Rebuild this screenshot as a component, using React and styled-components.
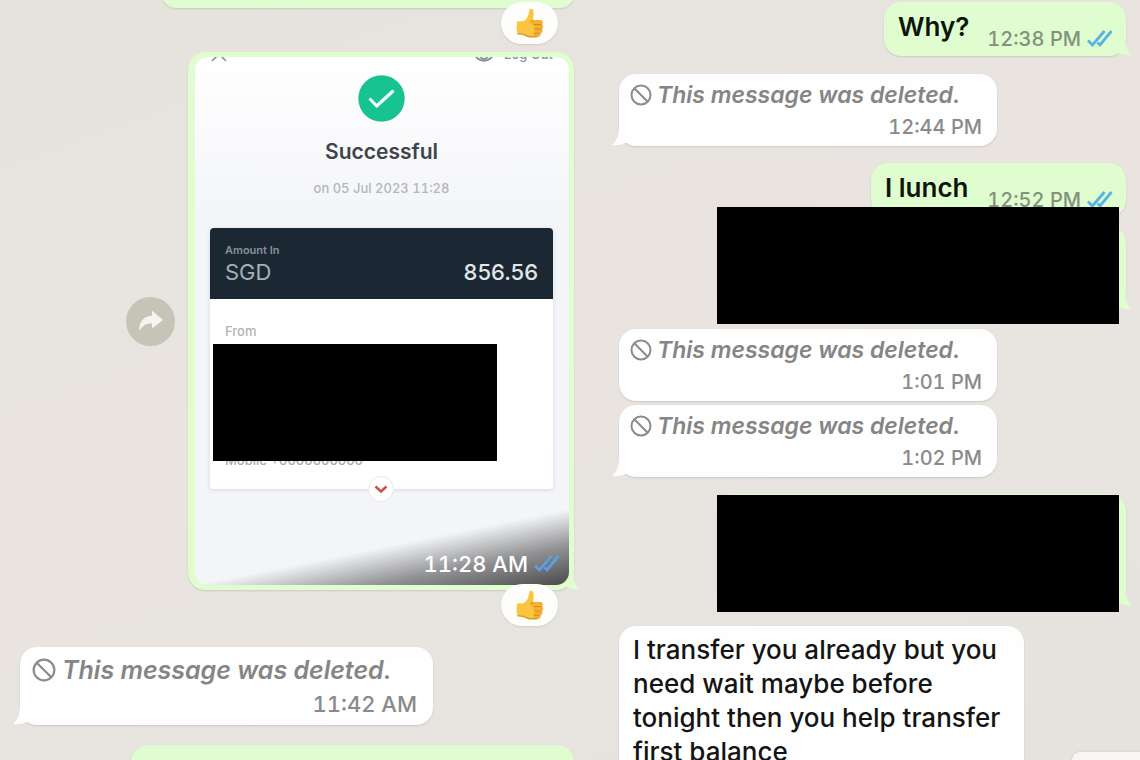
import React from "react";
import styled, { createGlobalStyle } from "styled-components";

const GlobalStyle = createGlobalStyle`
  * {
    box-sizing: border-box;
  }

  body {
    margin: 0;
    background-color: #e8e4df;
    font-family: Inter, "Liberation Sans", sans-serif;
  }

  p {
    margin: 0;
  }
`;

const Page = styled.main`
  position: relative;
  display: grid;
  grid-template-columns: 554fr 507fr;
  column-gap: 45px;
  height: 100vh;
  padding: 0 14px 0 20px;
  overflow: hidden;
  background: linear-gradient(160deg, #e6e3dd, #e9e4e0 45%, #e6e3de);
`;

const Chat = styled.section`
  display: flex;
  flex-direction: column;
  min-width: 0;
`;

const Bubble = styled.div`
  position: relative;
  flex-shrink: 0;
  align-self: ${(props) => (props.$mine ? "flex-end" : "flex-start")};
  width: ${(props) => props.$width || "auto"};
  height: ${(props) => props.$height || "auto"};
  margin-top: ${(props) => props.$space || 0}px;
  border-radius: 17px;
  background-color: ${(props) => (props.$mine ? "#e0fdcf" : "#fefefe")};
  box-shadow: 0 1px 2px rgba(0, 0, 0, 0.12);
`;

const TailSvg = styled.svg`
  position: absolute;
  bottom: 0;
  ${(props) => (props.$mine ? "right: -6px;" : "left: -7px;")}
  transform: ${(props) => (props.$mine ? "scaleX(-1)" : "none")};
`;

const DeletedBody = styled.div`
  display: flex;
  flex-direction: column;
  padding: ${(props) => (props.$large ? "7px 16px 3px 12px" : "5px 15px 3px 11px")};
`;

const DeletedText = styled.p`
  display: flex;
  align-items: center;
  gap: ${(props) => (props.$large ? 6 : 5)}px;
  color: #858585;
  font-size: ${(props) => (props.$large ? 25 : 23)}px;
  font-style: italic;
  font-weight: 600;
  line-height: 32px;
  white-space: nowrap;
`;

const Time = styled.time`
  align-self: flex-end;
  color: #8a8a8a;
  font-size: ${(props) => (props.$large ? 22 : 20)}px;
  font-variant-numeric: tabular-nums;
  font-weight: 500;
  line-height: ${(props) => (props.$large ? 36 : 32)}px;
  white-space: nowrap;
`;

const ShortBody = styled.div`
  display: flex;
  align-items: flex-start;
  justify-content: space-between;
  height: 54px;
  padding: 9px 13px 0 14px;
`;

const ShortText = styled.p`
  color: #0c150a;
  font-size: 26px;
  font-weight: 600;
  line-height: 32px;
`;

const Status = styled.div`
  display: flex;
  align-items: center;
  gap: 6px;
  padding-top: 12px;

  time {
    color: #84917d;
  }
`;

const LongText = styled.p`
  padding: 7px 14px;
  color: #141414;
  font-size: 26px;
  font-weight: 500;
  line-height: 34px;
`;

const Redacted = styled.div`
  position: absolute;
  top: ${(props) => props.$top}px;
  right: 7px;
  width: 402px;
  height: 117px;
  background-color: #000000;
`;

const Reaction = styled.div`
  position: absolute;
  right: 16px;
  bottom: -36px;
  z-index: 1;
  display: flex;
  align-items: center;
  justify-content: center;
  width: 57px;
  height: 42px;
  border-radius: 21px;
  background-color: #fdfdfc;
  box-shadow: 0 1px 2px rgba(0, 0, 0, 0.1);
`;

const PhotoRow = styled.div`
  display: flex;
  align-items: center;
  align-self: flex-end;
  gap: 13px;
  flex-shrink: 0;
  margin-top: 44px;
`;

const ForwardBtn = styled.button`
  display: flex;
  align-items: center;
  justify-content: center;
  width: 49px;
  height: 49px;
  padding: 0;
  border: 0;
  border-radius: 50%;
  background-color: #c6c3b7;
`;

const Photo = styled.div`
  position: relative;
  display: flex;
  flex-direction: column;
  height: 528px;
  margin: 5px 5px 5px 7px;
  padding: 0 16px 0 15px;
  overflow: hidden;
  border-radius: 13px;
  background: linear-gradient(#ffffff, #f4f5f9 30%, #f4f5f8);
`;

const PhotoHeader = styled.div`
  display: flex;
  justify-content: space-between;
  height: 18px;
  margin-top: -12px;
  color: #8c8f93;
  font-size: 13px;
  font-weight: 500;
  line-height: 18px;
`;

const LogOut = styled.span`
  display: flex;
  align-items: center;
  gap: 9px;
`;

const CheckSvg = styled.svg`
  align-self: center;
  flex-shrink: 0;
  margin-top: 12px;
`;

const ReceiptTitle = styled.p`
  margin-top: 14px;
  color: #3d444b;
  font-size: 21px;
  font-weight: 600;
  line-height: 32px;
  text-align: center;
`;

const ReceiptDate = styled.p`
  margin-top: 11px;
  color: #b4b6ba;
  font-size: 13px;
  font-variant-numeric: tabular-nums;
  font-weight: 500;
  line-height: 18px;
  text-align: center;
`;

const Receipt = styled.div`
  position: relative;
  height: 261px;
  margin-top: 31px;
  border-radius: 4px;
  background-color: #ffffff;
  box-shadow: 0 1px 4px rgba(40, 50, 70, 0.14);
`;

const Amount = styled.div`
  height: 71px;
  padding: 14px 15px;
  border-radius: 4px 4px 0 0;
  background-color: #1b2833;
`;

const Label = styled.p`
  color: ${(props) => (props.$dark ? "#87909a" : "#b0b2b5")};
  font-size: ${(props) => (props.$dark ? 11 : 13)}px;
  font-weight: ${(props) => (props.$dark ? 600 : 500)};
  line-height: 16px;
`;

const AmountRow = styled.div`
  display: flex;
  justify-content: space-between;
  color: #a7aeb6;
  font-size: 22px;
  line-height: 28px;

  strong {
    color: #e3e7ea;
    font-weight: 500;
  }
`;

const From = styled.div`
  display: flex;
  flex-direction: column;
  padding: 24px 15px 0;
`;

const Sender = styled.p`
  margin-top: 112px;
  color: #a9abae;
  font-size: 13px;
  font-weight: 500;
  line-height: 18px;
`;

const SenderCover = styled.div`
  position: absolute;
  top: 116px;
  left: 3px;
  width: 284px;
  height: 117px;
  background-color: #000000;
`;

const ExpandBtn = styled.button`
  position: absolute;
  bottom: -13px;
  left: calc(50% - 14px);
  display: flex;
  align-items: center;
  justify-content: center;
  width: 26px;
  height: 26px;
  padding: 0;
  border: 1px solid #e9e9ec;
  border-radius: 50%;
  background-color: #ffffff;
`;

const PhotoShade = styled.div`
  position: absolute;
  right: 0;
  bottom: 0;
  left: 0;
  display: flex;
  align-items: flex-end;
  justify-content: flex-end;
  height: 76px;
  padding: 0 9px 3px 0;
  background: linear-gradient(to bottom right, transparent 50%, rgba(20, 20, 20, 0.44) 74%, rgba(20, 20, 20, 0.76));

  time {
    color: #ffffff;
  }
`;

const PhotoStatus = styled.div`
  display: flex;
  align-items: center;
  gap: 6px;
`;

const ScrollBtn = styled.button`
  position: absolute;
  right: -10px;
  bottom: -40px;
  width: 78px;
  height: 48px;
  border: 0;
  border-radius: 8px;
  background-color: #f8f6f5;
  box-shadow: 0 0 2px rgba(0, 0, 0, 0.15);
`;

function Tail({ mine }) {
  return (
    <TailSvg $mine={mine} width="24" height="22" viewBox="0 0 24 22" aria-hidden="true">
      <path d="M7 0 C7 10 6 16 0 21 C6 22 12 20 15 18 L24 12 L20 0 Z" fill={mine ? "#e0fdcf" : "#fefefe"} />
    </TailSvg>
  );
}

function Ticks({ color = "#56b4e2" }) {
  return (
    <svg width="26" height="18" viewBox="0 0 26 18" fill="none" stroke={color} strokeWidth="2.8" aria-hidden="true">
      <path d="M1 10.5 L5.5 15 L17.5 1" />
      <path d="M10.5 12.5 L13 15 L24.5 1" />
    </svg>
  );
}

function Thumb() {
  return (
    <svg width="28" height="30" viewBox="0 0 28 30" role="img" aria-label="Thumbs up">
      <path
        d="M1 16 C0 14 2 13 4 13.5 L8 13 C11 11 13 7 13.3 2.5 C13.5 0 16.5 0 17.3 2.5 C18 5.5 17.6 9 17 12 L24 12 C27 12 27.6 15.4 25.6 16.4 C28 17.4 27.6 20.4 25.4 21 C27.2 22.2 26.4 25 24.2 25.2 C25 27.4 23.4 29 21 29 L15 29 C11 29 9.5 27.2 7 26.6 L1.6 26 C0.4 23 0.4 19 1 16 Z"
        fill="#fbc540"
      />
      <path d="M17 12 L24 12 C27 12 27.6 15.4 25.6 16.4 C28 17.4 27.6 20.4 25.4 21 C27.2 22.2 26.4 25 24.2 25.2 C25 27.4 23.4 29 21 29 L17 29 C19 24 18 18 15.5 15 Z" fill="#f5b032" />
      <path d="M18 16.5 H25.6 M18.5 21 H25.4 M18 25.2 H24.2" stroke="#cf8a25" strokeWidth="1.1" fill="none" />
      <path d="M1.4 25.6 L7 26.4 C9.5 27 11 28.8 15 28.8 L21 28.8" stroke="#d9962c" strokeWidth="1.4" fill="none" />
      <path d="M17 12 C15.5 12.6 14.8 13.6 14.6 15" stroke="#dd951f" strokeWidth="1.1" fill="none" />
    </svg>
  );
}

function Blocked({ size = 22 }) {
  return (
    <svg width={size} height={size} viewBox="0 0 22 22" fill="none" stroke="#8b8b8b" strokeWidth="2" aria-hidden="true">
      <circle cx="11" cy="11" r="9.5" />
      <path d="M4.3 4.3 L17.7 17.7" />
    </svg>
  );
}

function Deleted({ time, space, large, tail }) {
  return (
    <Bubble $space={space} $width={large ? "413px" : "378px"}>
      {tail && <Tail />}
      <DeletedBody $large={large}>
        <DeletedText $large={large}>
          <Blocked size={large ? 24 : 22} />
          This message was deleted.
        </DeletedText>
        <Time $large={large}>{time}</Time>
      </DeletedBody>
    </Bubble>
  );
}

function Sent({ text, time, space, width, tail }) {
  return (
    <Bubble $mine $space={space} $width={width}>
      {tail && <Tail mine />}
      <ShortBody>
        <ShortText>{text}</ShortText>
        <Status>
          <Time>{time}</Time>
          <Ticks />
        </Status>
      </ShortBody>
    </Bubble>
  );
}

function PaymentPhoto() {
  return (
    <Photo>
      <PhotoHeader>
        <svg width="18" height="18" viewBox="0 0 18 18" fill="none" stroke="#8c8f93" strokeWidth="1.6">
          <path d="M2 2 L16 16 M16 2 L2 16" />
        </svg>
        <LogOut>
          <svg width="22" height="18" viewBox="0 0 22 18" fill="none" stroke="#8c8f93" strokeWidth="1.8">
            <path d="M1 9 C6 2 16 2 21 9 C16 18 6 18 1 9 Z" />
            <circle cx="11" cy="10" r="4" />
          </svg>
          Log Out
        </LogOut>
      </PhotoHeader>
      <CheckSvg width="47" height="47" viewBox="0 0 47 47">
        <circle cx="23.5" cy="23.5" r="23.2" fill="#17c491" />
        <path d="M12.5 24.5 L18.7 31 L34.5 16.5" fill="none" stroke="#effff9" strokeWidth="3.2" strokeLinecap="round" strokeLinejoin="round" />
      </CheckSvg>
      <ReceiptTitle>Successful</ReceiptTitle>
      <ReceiptDate>on 05 Jul 2023 11:28</ReceiptDate>
      <Receipt>
        <Amount>
          <Label $dark>Amount In</Label>
          <AmountRow>
            <span>SGD</span>
            <strong>856.56</strong>
          </AmountRow>
        </Amount>
        <From>
          <Label>From</Label>
          <Sender>Mobile +0000000000</Sender>
        </From>
        <SenderCover />
        <ExpandBtn aria-label="Show more">
          <svg width="14" height="9" viewBox="0 0 14 9" fill="none" stroke="#c9534c" strokeWidth="2.6">
            <path d="M1.5 1.5 L7 6.5 L12.5 1.5" />
          </svg>
        </ExpandBtn>
      </Receipt>
      <PhotoShade>
        <PhotoStatus>
          <Time $large>11:28 AM</Time>
          <Ticks color="#5c9fe0" />
        </PhotoStatus>
      </PhotoShade>
    </Photo>
  );
}

function App() {
  return (
    <>
      <GlobalStyle />
      <Page>
        <Chat>
          <Bubble $mine $width="412px" $height="28px" $space={-20}>
            <Reaction>
              <Thumb />
            </Reaction>
          </Bubble>
          <PhotoRow>
            <ForwardBtn aria-label="Forward">
              <svg width="26" height="24" viewBox="0 0 26 24" fill="#f6f4f0">
                <path d="M14 1.5 L25 11 L14 19.5 V14.5 C8 14 4.5 16.5 1.5 22 C0.5 15 4 7.5 14 6.5 Z" />
              </svg>
            </ForwardBtn>
            <Bubble $mine $width="386px">
              <Tail mine />
              <PaymentPhoto />
              <Reaction>
                <Thumb />
              </Reaction>
            </Bubble>
          </PhotoRow>
          <Deleted time="11:42 AM" space={57} large tail />
          <Bubble $mine $width="443px" $height="80px" $space={20} />
        </Chat>
        <Chat>
          <Sent text="Why?" time="12:38 PM" space={2} width="242px" tail />
          <Deleted time="12:44 PM" space={18} tail />
          <Sent text="I lunch" time="12:52 PM" space={17} width="255px" />
          <Bubble $mine $width="409px" $height="84px" $space={9}>
            <Tail mine />
            <Redacted $top={-19} />
          </Bubble>
          <Deleted time="1:01 PM" space={19} />
          <Deleted time="1:02 PM" space={4} tail />
          <Bubble $mine $width="409px" $height="112px" $space={17}>
            <Tail mine />
            <Redacted $top={1} />
          </Bubble>
          <Bubble $width="405px" $space={20}>
            <LongText>I transfer you already but you need wait maybe before tonight then you help transfer first balance</LongText>
          </Bubble>
        </Chat>
        <ScrollBtn aria-label="Scroll to latest" />
      </Page>
    </>
  );
}

export default App;
